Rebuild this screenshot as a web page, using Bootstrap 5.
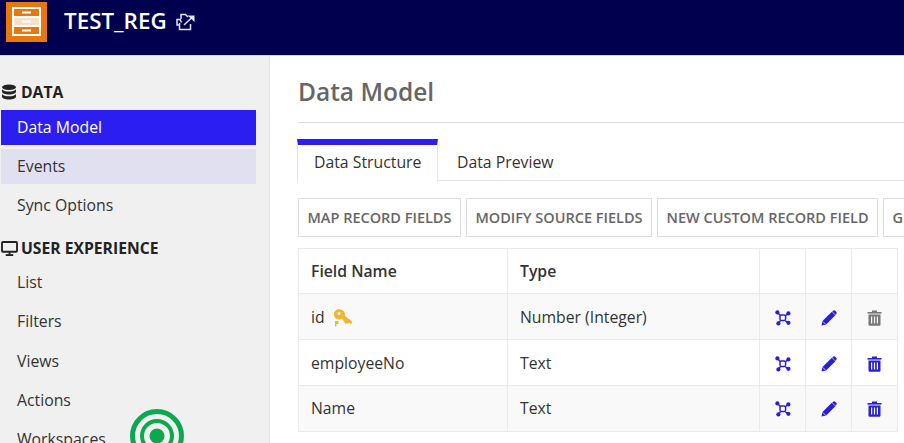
<!DOCTYPE html>
<html>
<head>
    <title>Data Model</title>
    <meta name="viewport" content="width=device-width, initial-scale=1">
    <link href="https://cdn.jsdelivr.net/npm/bootstrap@5.3.0/dist/css/bootstrap.min.css" rel="stylesheet">
    <style>
        html, body { height: 100%; overflow: hidden; }
        body { font-family: "Open Sans", "Liberation Sans", sans-serif; font-size: 16px; color: #333; background: #fff; }

        .top-bar { height: 56px; background: #00004f; border-bottom: 1px solid #d4d6e0; padding-left: 6px; gap: 17px; }
        .app-logo { width: 41px; height: 40px; margin-top: -12px; background: #e8770c; }
        .app-title { font-size: 22.4px; font-weight: 600; color: #fff; line-height: 1; margin-top: -12px; margin-right: 9px; }
        .share-icon { margin-top: -12px; }

        .page-body { height: 387px; }
        .side-nav { width: 270px; flex: none; background: #f0f0f0; border-right: 1px solid #e2e2e2; padding: 25px 13px 0 1px; overflow: hidden; }
        .side-head { font-size: 15.7px; font-weight: 700; color: #222; height: 22px; line-height: 22px; }
        .side-head svg { flex: none; }
        .db-glyph { margin: 0 5px 0 1px; }
        .screen-glyph { margin-right: 3px; }
        .side-group { margin-top: 7px; }
        .side-group + .side-head { margin-top: 13.8px; }
        .side-group-low { margin-top: 6px; }
        .side-item { display: block; height: 35px; line-height: 35px; margin-bottom: 4.2px; padding-left: 16px; font-size: 15.8px; color: #333; text-decoration: none; }
        .side-item.is-active { background: #2a1ff0; color: #fff; font-weight: 500; }
        .side-item.is-hover { background: #e1e0f0; }
        .status-dot { position: absolute; left: 130px; top: 409px; }

        .main-pane { flex: 1; min-width: 0; padding: 17px 0 0 27px; overflow: hidden; }
        .pane-title { font-size: 24.5px; font-weight: 600; color: #666; line-height: 37px; margin: 0 0 16px 1px; padding-bottom: 12px; border-bottom: 1px solid #ddd; }
        .tab-row { border-bottom: 1px solid #e6e6e6; height: 42px; }
        .tab-link { display: block; flex: none; height: 42px; padding: 0 16px 0 19px; line-height: 35px; font-size: 15.8px; color: #333; text-decoration: none; border-top: 6px solid transparent; white-space: nowrap; }
        .tab-link.is-current { width: 141px; padding: 0 0 0 16px; background: #fff; border-top-color: #2a1ff0; border-right: 1px solid #e6e6e6; border-left: 1px solid #e6e6e6; height: 43px; }
        .tool-row { margin: 17px 0 11px 1px; gap: 5px; white-space: nowrap; }
        .tool-btn { flex: none; height: 39px; padding: 0 8.5px; font-size: 14.5px; font-weight: 600; color: #666; background: #fff; border: 1px solid #ddd; border-radius: 0; line-height: 37px; }
        .field-table { width: 599px; margin: 0 0 0 1px; table-layout: fixed; border-color: #eaeaea; font-size: 15.75px; color: #333; }
        .field-table th, .field-table td { padding: 1px 12px 0; vertical-align: middle; height: 46px; border: 1px solid #eaeaea; font-weight: 400; }
        .field-table th { font-weight: 600; height: 45px; background: #fff; }
        .field-table tbody tr:nth-child(odd) td { background: #f9f9f9; }
        .field-table tbody td { padding-top: 2px; }
        .field-table tbody tr:last-child td { padding-top: 0; }
        .field-table td.icon-cell { padding-left: 0; padding-right: 0; text-align: center; }
        .field-table svg { vertical-align: middle; }
        .key-icon { margin-left: 9px; }
    </style>
</head>
<body>
    <!-- Header -->
    <div class="top-bar d-flex align-items-center">
        <div class="app-logo d-flex align-items-center justify-content-center">
            <svg width="29" height="29" viewBox="0 0 29 29">
                <rect x="1" y="1" width="27" height="27" fill="#f8e0c4" stroke="#fff" stroke-width="2"/>
                <rect x="2" y="2" width="25" height="7" fill="#e8770c"/>
                <rect x="2" y="20" width="25" height="7" fill="#e8770c"/>
                <path d="M1 10h27M1 19h27" stroke="#fff" stroke-width="2"/>
                <path d="M10 5.5h9M10 14.5h9M10 23.5h9" stroke="#fff" stroke-width="2"/>
            </svg>
        </div>
        <div class="d-flex align-items-center">
            <span class="app-title">TEST_REG</span>
            <svg class="share-icon" width="20" height="18" viewBox="0 0 20 18" fill="none" stroke="#e4e4f4" stroke-width="1.5">
                <path d="M5 6V1.5h4.5L12 4"/>
                <path d="M5.5 9.5L4 6.5H1V12h2"/>
                <path d="M3.5 10v6.5h11V11"/>
                <path d="M8 12l8-7.5"/>
                <path d="M11.5 2.5h7v6.5z" fill="#e4e4f4" stroke="none"/>
            </svg>
        </div>
    </div>

    <div class="page-body d-flex">
        <!-- Sidebar -->
        <div class="side-nav">
            <div class="side-head d-flex align-items-center">
                <svg class="db-glyph" width="14" height="16" viewBox="0 0 14 16" fill="#222">
                    <ellipse cx="7" cy="3.2" rx="7" ry="2.8"/>
                    <path d="M0 5.2c1 1.6 3.8 2.3 7 2.3s6-.7 7-2.3v2.6c0 1.5-3.1 2.7-7 2.7s-7-1.2-7-2.7z"/>
                    <path d="M0 10c1 1.6 3.8 2.3 7 2.3s6-.7 7-2.3v2.8c0 1.5-3.1 2.7-7 2.7s-7-1.2-7-2.7z"/>
                </svg>
                <span>DATA</span>
            </div>
            <div class="side-group">
                <a class="side-item is-active" href="#">Data Model</a>
                <a class="side-item is-hover" href="#">Events</a>
                <a class="side-item" href="#">Sync Options</a>
            </div>
            <div class="side-head d-flex align-items-center">
                <svg class="screen-glyph" width="17" height="15" viewBox="0 0 18 16" fill="none" stroke="#222">
                    <rect x="1" y="1" width="16" height="10.5" rx="1" stroke-width="2"/>
                    <path d="M9 12v2" stroke-width="2"/>
                    <path d="M5 15h8" stroke-width="2"/>
                </svg>
                <span>USER EXPERIENCE</span>
            </div>
            <div class="side-group side-group-low">
                <a class="side-item" href="#">List</a>
                <a class="side-item" href="#">Filters</a>
                <a class="side-item" href="#">Views</a>
                <a class="side-item" href="#">Actions</a>
                <a class="side-item" href="#">Workspaces</a>
            </div>
        </div>

        <!-- Main -->
        <div class="main-pane">
            <h1 class="pane-title">Data Model</h1>
            <div class="tab-row d-flex">
                <a class="tab-link is-current" href="#">Data Structure</a>
                <a class="tab-link" href="#">Data Preview</a>
            </div>
            <div class="tool-row d-flex">
                <button class="tool-btn" type="button">MAP RECORD FIELDS</button>
                <button class="tool-btn" type="button">MODIFY SOURCE FIELDS</button>
                <button class="tool-btn" type="button">NEW CUSTOM RECORD FIELD</button>
                <button class="tool-btn" type="button">GENERATE</button>
            </div>
            <table class="table field-table">
                <colgroup>
                    <col style="width: 209px">
                    <col style="width: 252px">
                    <col style="width: 46px">
                    <col style="width: 46px">
                    <col style="width: 46px">
                </colgroup>
                <thead>
                    <tr><th>Field Name</th><th>Type</th><th></th><th></th><th></th></tr>
                </thead>
                <tbody id="field-rows"></tbody>
            </table>
        </div>
    </div>

    <svg class="status-dot" width="54" height="54" viewBox="0 0 54 54">
        <circle cx="27" cy="27" r="24.5" fill="none" stroke="#0ba94f" stroke-width="5"/>
        <circle cx="27" cy="27" r="15" fill="none" stroke="#0ba94f" stroke-width="4"/>
        <circle cx="27" cy="27" r="7.5" fill="#0ba94f"/>
    </svg>

    <script src="https://cdn.jsdelivr.net/npm/bootstrap@5.3.0/dist/js/bootstrap.bundle.min.js"></script>
    <script>
        const blue = '#2a1fd8';
        const mapIcon = `<svg width="16" height="16" viewBox="0 0 16 16" fill="${blue}"><circle cx="2.4" cy="2.4" r="2.1"/><circle cx="13.4" cy="3.4" r="2.1"/><circle cx="3.4" cy="13.4" r="2.1"/><circle cx="13.4" cy="12.8" r="2.1"/><path d="M2.4 2.4l3 3M13.4 3.4l-3 2.4M3.4 13.4l2-2.6M13.4 12.8l-3-2" stroke="${blue}" stroke-width="1.4"/><rect x="5" y="5" width="5.6" height="5.6" rx="1.6" fill="#fff" stroke="${blue}" stroke-width="1.5"/></svg>`;
        const penIcon = `<svg width="16" height="16" viewBox="0 0 16 16" fill="${blue}"><path d="M0.5 15.5l1-4.6L10.8 1.7l3.6 3.6-9.3 9.2z"/><path d="M1.8 11.4l2.9 2.9" stroke="#fff" stroke-width=".7"/><path d="M11.8.9c.8-.8 1.8-.8 2.5-.1l.9.9c.7.7.7 1.7-.1 2.5l-.7.6-3.2-3.2z"/></svg>`;
        const binIcon = (c) => `<svg width="15" height="16" viewBox="0 0 15 16" fill="${c}"><path d="M0.5 2h14v1.6H.5z"/><path d="M5 .5h5V2H5z"/><path fill-rule="evenodd" d="M1.5 4.5h12v10c0 .8-.6 1.3-1.3 1.3H2.8c-.7 0-1.3-.5-1.3-1.3zM4 6.5v7h1.2v-7zM6.9 6.5v7h1.2v-7zM9.8 6.5v7H11v-7z"/></svg>`;
        const keyIcon = `<svg class="key-icon" width="19" height="18" viewBox="0 0 19 18" fill="#f3b52c"><path fill-rule="evenodd" d="M6 0.5a5 5 0 0 1 4.8 6.3l7.7 6.2-1.6 2.2-2-1.4-1 1.2-1.3-1-.9 1-3.8-5.6A5 5 0 1 1 6 .5zM5 3a1.6 1.6 0 1 0 0 3.2A1.6 1.6 0 0 0 5 3z"/><path d="M1 12h3.4v3H2.4v2.6H1z"/></svg>`;

        const rows = [
            { name: 'id', type: 'Number (Integer)', isKey: true },
            { name: 'employeeNo', type: 'Text' },
            { name: 'Name', type: 'Text' }
        ];

        document.getElementById('field-rows').innerHTML = rows.map(r => `
            <tr>
                <td>${r.name}${r.isKey ? keyIcon : ''}</td>
                <td>${r.type}</td>
                <td class="icon-cell">${mapIcon}</td>
                <td class="icon-cell">${penIcon}</td>
                <td class="icon-cell">${binIcon(r.isKey ? '#777' : blue)}</td>
            </tr>`).join('');
    </script>
</body>
</html>
